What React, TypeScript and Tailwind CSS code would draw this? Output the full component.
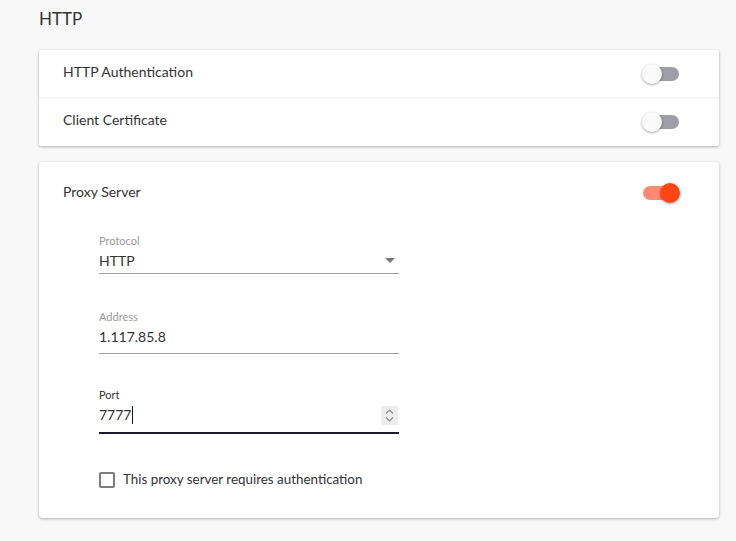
import React from "react";

function Toggle({ on }: { on: boolean }) {
  return (
    <div className="relative w-[38px] h-[20px] flex items-center">
      <div
        className={
          "w-[36px] h-[14px] rounded-full ml-[1px] " +
          (on ? "bg-[#ff8a70]" : "bg-[#9e9ea6]")
        }
      />
      <div
        className={
          "absolute top-0 w-[20px] h-[20px] rounded-full shadow-[0_1px_3px_rgba(0,0,0,0.35)] " +
          (on ? "left-[18px] bg-[#ff4514]" : "left-0 bg-[#fafafa]")
        }
      />
    </div>
  );
}

export default function App() {
  return (
    <div
      className="w-full h-[541px] bg-[#f8f8f8] px-[39px] pr-[17px] text-[#333]"
      style={{ fontFamily: "Lato, 'Open Sans', sans-serif" }}
    >
      <div className="pt-[8px] h-[50px] text-[17px] leading-[22px] text-[#333]">HTTP</div>
      <div className="bg-white rounded-[2px] shadow-[0_1px_3px_rgba(0,0,0,0.3)]">
        <div className="h-[47px] flex items-center justify-between pl-[24px] pr-[39px] shadow-[0_1px_2px_rgba(0,0,0,0.08)] relative">
          <span className="text-[14px] mb-[4px]">HTTP Authentication</span>
          <Toggle on={false} />
        </div>
        <div className="h-[49px] flex items-center justify-between pl-[24px] pr-[39px]">
          <span className="text-[14px] mb-[4px]">Client Certificate</span>
          <Toggle on={false} />
        </div>
      </div>
      <div className="mt-[16px] bg-white rounded-[4px] shadow-[0_1px_3px_rgba(0,0,0,0.3)] h-[356px]">
        <div className="h-[62px] flex items-center justify-between pl-[24px] pr-[39px]">
          <span className="text-[14px] mb-[4px]">Proxy Server</span>
          <Toggle on={true} />
        </div>
        <div className="pl-[60px] pt-[10px]">
          <div className="w-[300px]">
            <div className="text-[11px] leading-[14px] text-[#9a9a9a]">Protocol</div>
            <div className="mt-[2px] h-[21px] flex items-center justify-between border-b border-[#9e9e9e] pb-[2px] box-content">
              <span className="text-[14px]">HTTP</span>
              <svg width="10" height="5" viewBox="0 0 10 5" className="mr-[4px]">
                <path d="M0 0 L10 0 L5 5 Z" fill="#7a7a7a" />
              </svg>
            </div>
          </div>
          <div className="w-[300px] mt-[36px]">
            <div className="text-[11px] leading-[14px] text-[#9a9a9a]">Address</div>
            <div className="mt-[2px] h-[21px] flex items-center border-b border-[#9e9e9e] pb-[6px] box-content">
              <span className="text-[14px]">1.117.85.8</span>
            </div>
          </div>
          <div className="w-[300px] mt-[34px]">
            <div className="text-[11px] leading-[14px] text-[#333]">Port</div>
            <div className="mt-[2px] h-[21px] flex items-center justify-between border-b-2 border-[#1c1b2b] pb-[7px] box-content">
              <span className="text-[14px] flex items-center">
                7777
                <span className="inline-block w-[1px] h-[18px] bg-[#111] ml-[1px]" />
              </span>
              <div className="w-[17px] h-[19px] bg-[#ededed] flex flex-col items-center justify-center gap-[3px] mr-[1px] mt-[2px]">
                <svg width="9" height="5" viewBox="0 0 9 5">
                  <path d="M1 4.5 L4.5 1 L8 4.5" stroke="#8a8a8a" strokeWidth="1.2" fill="none" />
                </svg>
                <svg width="9" height="5" viewBox="0 0 9 5">
                  <path d="M1 0.5 L4.5 4 L8 0.5" stroke="#8a8a8a" strokeWidth="1.2" fill="none" />
                </svg>
              </div>
            </div>
          </div>
          <div className="mt-[35px] flex items-center gap-[8px]">
            <div className="w-[16px] h-[16px] border-2 border-[#7b7b80] rounded-[2px]" />
            <span className="text-[13.4px] mb-[2px]">This proxy server requires authentication</span>
          </div>
        </div>
      </div>
    </div>
  );
}
